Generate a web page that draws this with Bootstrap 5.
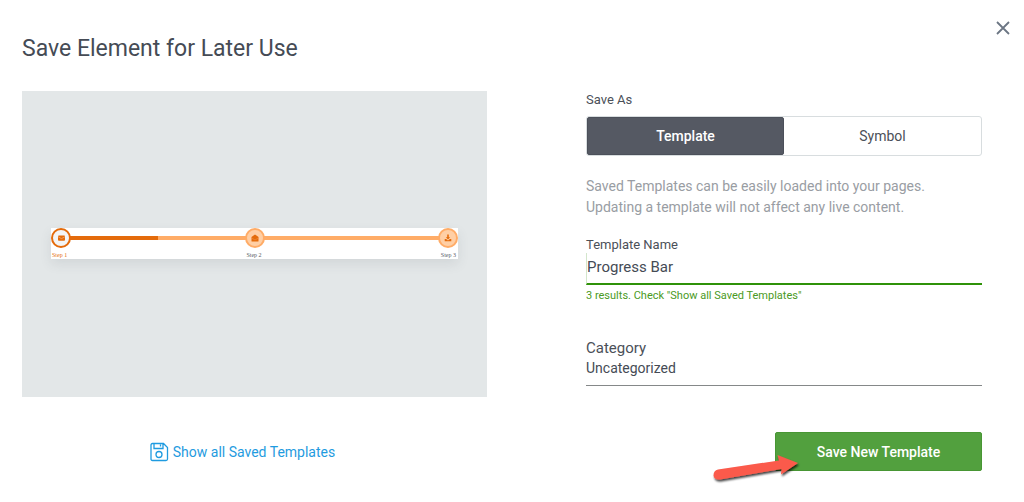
<!DOCTYPE html>
<html lang="en">
<head>
<meta charset="utf-8">
<meta name="viewport" content="width=device-width, initial-scale=1">
<title>Save Element for Later Use</title>
<link href="https://cdn.jsdelivr.net/npm/bootstrap@5.3.0/dist/css/bootstrap.min.css" rel="stylesheet">
<style>
body { font-family: Roboto, "Open Sans", sans-serif; font-size: 14px; line-height: 20px; color: #4b5058; background: #fff; }
.dialog-box { padding: 16px 42px 16px 22px; }
.dialog-title { font-size: 23px; line-height: 32px; margin: 17px 0 26px; font-weight: 400; color: #454b55; }
.close-x { top: 20px; right: 13px; line-height: 0; color: #6c7684; }
.save-grid { display: grid; grid-template-columns: 465fr 396fr; column-gap: 99px; row-gap: 35px; }
.preview { background: #e3e7e8; aspect-ratio: 465 / 306; padding: 0 29px 2px; }
.strip { background: #fff; height: 31px; box-shadow: 0 5px 12px rgba(60,70,80,.1); font: 6px/8px "Liberation Serif", serif; color: #555b66; }
.rail { height: 4px; left: 10px; right: 10px; top: 8px; background: #ffac67; }
.rail-done { height: 4px; width: 25%; background: #e46b0b; }
.step-dot { width: 20px; height: 20px; border: 2px solid #ffac67; background: #ffcfa5; color: #e46b0b; border-radius: 50%; }
.step-dot.current { border-color: #e46b0b; background: #f3f4f5; }
.step-names { margin-top: 3px; padding: 0 2px 0 1px; }
.step-now { color: #e46b0b; }
.field-label { font-size: 13px; line-height: 17px; margin: 0; float: none; }
.segments { border: 1px solid #d8dddf; border-radius: 3px; height: 40px; margin-top: 8px; }
.segments .btn { --bs-btn-font-size: 14px; --bs-btn-line-height: 20px; --bs-btn-color: #4b5058; --bs-btn-active-bg: #555963; --bs-btn-active-border-color: #4c505a; --bs-btn-active-color: #fff; --bs-btn-padding-y: 8px; --bs-btn-border-radius: 2px; }
.segments .btn-check:checked + .btn { font-weight: 500; }
.hint { line-height: 21px; color: #999da3; margin: 20px 0 18px; }
.line-input { border: 0; border-bottom: 2px solid #2f9209; border-left: 1px solid #d3e6cc; border-radius: 0; padding: 0 0 3px; height: 32px; font-size: 15px; line-height: 20px; color: #454b55; }
.line-input:focus { box-shadow: none; border-color: #2f9209; }
.result-note { font-size: 11px; line-height: 16px; color: #4a9a24; margin: 3px 0 34px; }
.line-select { border: 0; border-bottom: 1px solid #858889; border-radius: 0; background-image: none; padding: 0 0 7px; height: 28px; font-size: 14px; line-height: 20px; color: #454b55; }
.big-label { font-size: 15px; }
.saved-row { padding-right: 25px; }
.saved-link { color: #1f9be0; }
.save-btn { --bs-btn-font-size: 14px; --bs-btn-line-height: 20px; --bs-btn-font-weight: 500; --bs-btn-bg: #52a03e; --bs-btn-border-color: #489634; --bs-btn-color: #fff; --bs-btn-hover-bg: #46902f; --bs-btn-hover-color: #fff; --bs-btn-border-radius: 2px; height: 39px; width: 207px; }
.pointer { right: 178px; top: 20px; pointer-events: none; }
</style>
</head>
<body>
<main class="dialog-box position-relative">
  <button type="button" class="close-x position-absolute btn p-0 border-0" aria-label="Close">
    <svg width="16" height="16" viewBox="0 0 16 16" fill="none" stroke="currentColor" stroke-width="1.8"><path d="M2 2l12 12M14 2L2 14"/></svg>
  </button>
  <h1 class="dialog-title">Save Element for Later Use</h1>
  <div class="save-grid">
    <section class="preview d-flex align-items-center" aria-label="Element preview">
      <div class="strip position-relative w-100">
        <div class="rail position-absolute"><div class="rail-done"></div></div>
        <div class="position-relative d-flex justify-content-between">
          <span class="step-dot current d-flex align-items-center justify-content-center"><svg width="7" height="6" viewBox="0 0 8 6"><rect width="8" height="6" rx="1" fill="currentColor"/><path d="M0 1.5l4 2.2 4-2.2" fill="none" stroke="#f7c49c" stroke-width=".6"/></svg></span>
          <span class="step-dot d-flex align-items-center justify-content-center"><svg width="8" height="8" viewBox="0 0 8 8"><path d="M4 .5L.5 3v4q0 .5.5.5h6q.5 0 .5-.5V3z" fill="currentColor"/><path d="M1 4.3l3 1.6 3-1.6" fill="none" stroke="#f59b4e" stroke-width=".5"/></svg></span>
          <span class="step-dot d-flex align-items-center justify-content-center"><svg width="8" height="8" viewBox="0 0 8 8"><path d="M3.2.5h1.6v2.800h1.400L4 5.400 1.800 3.300h1.400zM.7 5h1.400L4 6.400 5.900 5h1.400v2.300H.7z" fill="currentColor"/></svg></span>
        </div>
        <div class="step-names d-flex justify-content-between position-relative">
          <span class="step-now">Step 1</span><span>Step 2</span><span>Step 3</span>
        </div>
      </div>
    </section>
    <form id="saveForm">
      <fieldset>
        <legend class="field-label">Save As</legend>
        <div class="segments d-flex">
          <input type="radio" class="btn-check" name="kind" id="kindTemplate" checked>
          <label class="btn flex-fill w-50" for="kindTemplate">Template</label>
          <input type="radio" class="btn-check" name="kind" id="kindSymbol">
          <label class="btn flex-fill w-50" for="kindSymbol">Symbol</label>
        </div>
      </fieldset>
      <p class="hint">Saved Templates can be easily loaded into your pages.<br>Updating a template will not affect any live content.</p>
      <label class="field-label d-block" for="templateName">Template Name</label>
      <input class="form-control line-input" id="templateName" type="text" value="Progress Bar">
      <p class="result-note">3 results. Check "Show all Saved Templates"</p>
      <label class="big-label d-block" for="category">Category</label>
      <select class="form-select line-select" id="category"><option>Uncategorized</option></select>
    </form>
    <div class="saved-row d-flex justify-content-center align-items-center">
      <a href="#" class="saved-link text-decoration-none d-flex align-items-center">
        <svg class="me-1" width="20" height="20" viewBox="0 0 20 20" fill="none" stroke="currentColor" stroke-width="1.3"><path d="M3.500 1.500h11l4 4v11.500q0 1.500-1.500 1.500H3.500Q2 18.500 2 17V3q0-1.500 1.500-1.500zM5 1.500v5h9v-5M11.500 2.500v2"/><circle cx="10" cy="12.500" r="3"/></svg>
        <span>Show all Saved Templates</span>
      </a>
    </div>
    <div class="position-relative text-end">
      <button type="submit" form="saveForm" class="btn save-btn">Save New Template</button>
      <svg class="pointer position-absolute" width="92" height="36" viewBox="0 0 92 36">
        <defs><filter id="soft" x="-10%" y="-20%" width="120%" height="150%"><feDropShadow dx="1" dy="2" stdDeviation="1.300" flood-color="#000" flood-opacity=".75"/></filter></defs>
        <path d="M6 17.500L67 8.500 65.500 3 86 11 69 22.500 69.500 17 8 27.500Q2 28 1.500 23.500 1.500 18.500 6 17.500z" fill="#fb5a4b" filter="url(#soft)"/>
      </svg>
    </div>
  </div>
</main>
<script src="https://cdn.jsdelivr.net/npm/bootstrap@5.3.0/dist/js/bootstrap.bundle.min.js"></script>
</body>
</html>
